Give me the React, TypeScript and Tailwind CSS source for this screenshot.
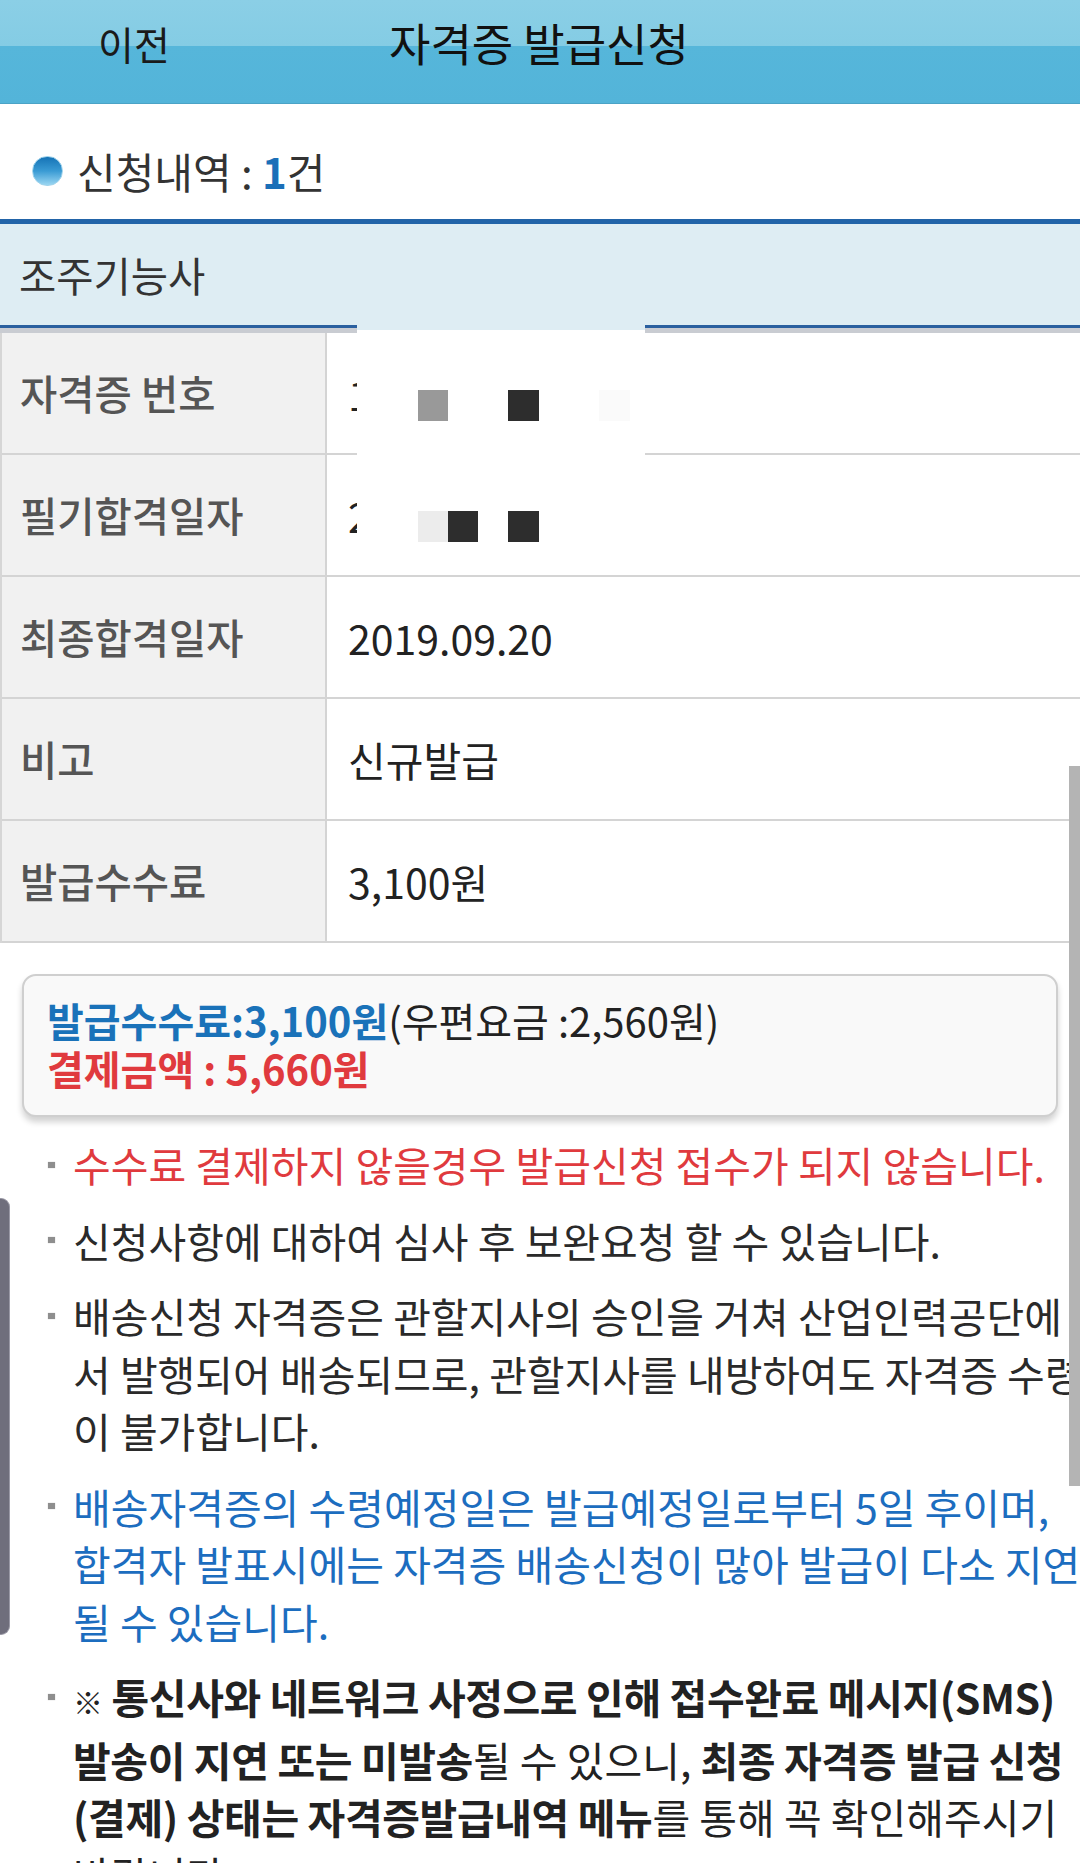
import React from "react";

const rows: { label: string; value: string }[] = [
  { label: "자격증 번호", value: "1" },
  { label: "필기합격일자", value: "2" },
  { label: "최종합격일자", value: "2019.09.20" },
  { label: "비고", value: "신규발급" },
  { label: "발급수수료", value: "3,100원" },
];

function Marker() {
  return (
    <span className="flex h-[57.5px] w-[25px] shrink-0 items-center">
      <span className="block h-[6px] w-[7px] bg-[#8e8e8e] shadow-[0_0_1px_#bbb]" />
    </span>
  );
}

export default function App() {
  return (
    <div className="relative h-[1863px] w-[1080px] overflow-hidden bg-white font-[family-name:'Noto_Sans_CJK_KR','Noto_Sans',sans-serif] text-[#222]">
      {/* Header */}
      <header className="flex h-[104px] items-start border-b border-[#4ba3c6] bg-[linear-gradient(to_bottom,#8bcfe6_0%,#84cce4_45%,#56b6da_45%,#53b4d9_100%)] pl-[98px] pt-[18px]">
        <span className="w-[291px] text-[39px] leading-[50px] text-[#1a1a1a]">이전</span>
        <span className="text-[45px] leading-[50px] text-[#111]">자격증 발급신청</span>
      </header>

      {/* count row */}
      <div className="flex h-[115px] items-center pl-[32px] pt-[19px]">
        <span className="block h-[30px] w-[31px] rounded-full border border-[#9fd3ec] bg-[linear-gradient(to_bottom,#1573b6_0%,#3a9bd4_50%,#9ad6f2_100%)]" />
        <span className="ml-[14px] text-[42px] leading-[50px] text-[#333]">
          신청내역 : <span className="font-bold text-[#1a6fb8]">1</span>건
        </span>
      </div>
      <div className="h-[5px] bg-[#2264a8]" />

      {/* section title */}
      <div className="flex h-[101px] items-center bg-[#deedf3] pl-[19px]">
        <span className="text-[40.5px] leading-[50px] text-[#333]">조주기능사</span>
      </div>
      <div className="h-[3px] bg-[#2a609f]" />
      <div className="h-[5px] bg-[#c9ccd2]" />

      {/* table */}
      <div className="border-l-2 border-[#d6d6d6]">
        {rows.map((r) => (
          <div key={r.label} className="flex h-[122px] border-b-2 border-[#d4d4d4]">
            <div className="flex w-[325px] shrink-0 items-center border-r-2 border-[#d4d4d4] bg-[#f1f1f1] pl-[18px]">
              <span className="text-[40.5px] font-medium leading-[50px] text-[#555]">{r.label}</span>
            </div>
            <div className="flex items-center pl-[21px]">
              <span className="text-[41px] leading-[50px] text-[#222]">{r.value}</span>
            </div>
          </div>
        ))}
      </div>

      {/* payment box */}
      <div className="mx-[22px] mt-[31px] h-[143px] rounded-[14px] border-2 border-[#cfcfcf] bg-[#f9f9f9] pl-[23px] pt-[20px] shadow-[0_5px_6px_rgba(0,0,0,0.18)]">
        <p className="whitespace-nowrap text-[40px] leading-[48px]">
          <span className="font-bold text-[#1a72b9]">발급수수료:3,100원</span>
          <span className="text-[#222]">(우편요금 :2,560원)</span>
        </p>
        <p className="whitespace-nowrap text-[40px] font-bold leading-[48px] text-[#e03a3e]">결제금액 : 5,660원</p>
      </div>

      {/* notes */}
      <div className="mt-[19px] flex flex-col gap-[18px] pl-[48px] text-[41px] leading-[57.5px]">
        <div className="flex">
          <Marker />
          <div className="whitespace-nowrap text-[#e03a3e]">수수료 결제하지 않을경우 발급신청 접수가 되지 않습니다.</div>
        </div>
        <div className="flex">
          <Marker />
          <div className="whitespace-nowrap text-[#2a2a2a]">신청사항에 대하여 심사 후 보완요청 할 수 있습니다.</div>
        </div>
        <div className="flex">
          <Marker />
          <div className="whitespace-nowrap text-[#2a2a2a]">
            배송신청 자격증은 관할지사의 승인을 거쳐 산업인력공단에
            <br />
            서 발행되어 배송되므로, 관할지사를 내방하여도 자격증 수령
            <br />이 불가합니다.
          </div>
        </div>
        <div className="flex">
          <Marker />
          <div className="whitespace-nowrap text-[#1c6dbf]">
            배송자격증의 수령예정일은 발급예정일로부터 5일 후이며,
            <br />
            합격자 발표시에는 자격증 배송신청이 많아 발급이 다소 지연
            <br />될 수 있습니다.
          </div>
        </div>
        <div className="flex">
          <Marker />
          <div className="whitespace-nowrap text-[#222]">
            <span className="font-bold tracking-[-0.4px]">
              <span className="text-[30px]">※</span> 통신사와 네트워크 사정으로 인해 접수완료 메시지(SMS)
            </span>
            <br />
            <span className="font-bold tracking-[-0.4px]">발송이 지연 또는 미발송</span>될 수 있으니,{" "}
            <span className="font-bold tracking-[-0.4px]">최종 자격증 발급 신청</span>
            <br />
            <span className="font-bold tracking-[-0.4px]">(결제) 상태는 자격증발급내역 메뉴</span>를 통해 꼭 확인해주시기
            <br />
            바랍니다.
          </div>
        </div>
      </div>

      {/* redaction overlay */}
      <div className="absolute left-[357px] top-[324px] h-[248px] w-[288px] border-t-[6px] border-[#deedf3] bg-white">
        <span className="absolute left-[61px] top-[60px] h-[31px] w-[30px] bg-[#999999]" />
        <span className="absolute left-[151px] top-[60px] h-[31px] w-[31px] bg-[#2d2d2d]" />
        <span className="absolute left-[242px] top-[60px] h-[31px] w-[31px] bg-[#fafafa]" />
        <span className="absolute left-[61px] top-[181px] h-[31px] w-[30px] bg-[#ececec]" />
        <span className="absolute left-[91px] top-[181px] h-[31px] w-[30px] bg-[#2d2d2d]" />
        <span className="absolute left-[151px] top-[181px] h-[31px] w-[31px] bg-[#2d2d2d]" />
      </div>

      {/* right scrollbar */}
      <div className="absolute right-0 top-[766px] h-[720px] w-[11px] bg-[#b4b4b4]" />

      {/* left edge handle */}
      <div className="absolute left-0 top-[1198px] h-[437px] w-[10px] rounded-r-[9px] border border-l-0 border-[#9a99a6] bg-[#6f6e7c]" />
    </div>
  );
}
